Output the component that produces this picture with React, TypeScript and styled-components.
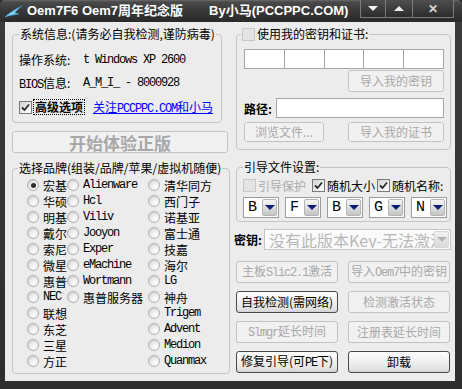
import styled, { createGlobalStyle } from "styled-components";

const GlobalStyle = createGlobalStyle`
  html, body {
    margin: 0;
    padding: 0;
    background: #2f2f2f;
  }
  body {
    font-family: "Noto Sans CJK SC", "Liberation Sans", sans-serif;
    font-size: 12px;
    color: #000;
  }
`;

const Window = styled.div`
  width: 462px;
  height: 389px;
  box-sizing: border-box;
  display: flex;
  flex-direction: column;
  background: linear-gradient(#3c3c3c, #2e2e2e);
  border-radius: 5px 5px 0 0;
  overflow: hidden;
`;

const TitleBar = styled.div`
  height: 22px;
  flex: none;
  display: flex;
  align-items: flex-start;
  padding-left: 5px;
  background: linear-gradient(#6a6a6a 0, #4a4a4a 2px, #363636 55%, #2a2a2a 100%);
  color: #fff;
  font-family: "Liberation Sans", "Noto Sans CJK SC", sans-serif;
  font-weight: bold;
  font-size: 13px;
`;

const TitleText = styled.span<{ $gap: number }>`
  line-height: 22px;
  margin-right: ${(p) => p.$gap}px;
  white-space: nowrap;
`;

const Controls = styled.div`
  margin-left: auto;
  margin-right: 8px;
  display: flex;
`;

const CtrlBtn = styled.div<{ $w: number }>`
  width: ${(p) => p.$w}px;
  height: 18px;
  box-sizing: border-box;
  border: 1px solid #7c7c7c;
  border-top: none;
  margin-left: -1px;
  background: linear-gradient(#4e4e4e, #2c2c2c);
  display: flex;
  align-items: center;
  justify-content: center;
  color: #d8d8d8;
  font-size: 12px;
`;

const Tri = styled.span<{ $up?: boolean; $color?: string }>`
  width: 0;
  height: 0;
  border-left: 5px solid transparent;
  border-right: 5px solid transparent;
  ${(p) =>
    p.$up
      ? `border-bottom: 5px solid ${p.$color || "#f0f0f0"};`
      : `border-top: 5px solid ${p.$color || "#f0f0f0"};`}
`;

const Body = styled.div`
  flex: 1;
  margin: 0 7px 8px 5px;
  background: #ececec;
  display: flex;
  gap: 6px;
  padding: 5px 4px 0 7px;
`;

const Column = styled.div<{ $w: number }>`
  width: ${(p) => p.$w}px;
  display: flex;
  flex-direction: column;
`;

const Group = styled.fieldset<{ $w?: number; $pad: string }>`
  margin: 0;
  min-width: 0;
  width: ${(p) => (p.$w ? `${p.$w}px` : "auto")};
  box-sizing: border-box;
  border: 1px solid #c4c4c4;
  border-radius: 4px;
  padding: ${(p) => p.$pad};
  display: flex;
  flex-direction: column;
`;

const Legend = styled.legend<{ $ml: number }>`
  padding: 0 1px;
  margin-left: ${(p) => p.$ml}px;
  line-height: 14px;
  height: 14px;
  display: flex;
  align-items: center;
  gap: 2px;
  white-space: nowrap;
`;

const Latin = styled.span<{ $size?: number }>`
  font-family: "Liberation Mono", monospace;
  font-size: ${(p) => p.$size || 12}px;
  letter-spacing: -1.2px;
`;

const InfoRow = styled.div<{ $mt?: number }>`
  display: grid;
  grid-template-columns: 64px 1fr;
  align-items: center;
  height: 16px;
  margin-top: ${(p) => p.$mt || 0}px;
  white-space: nowrap;
`;

const OptionRow = styled.div`
  display: flex;
  align-items: center;
  height: 16px;
  margin-top: 9px;
  white-space: nowrap;
`;

const Box = styled.span<{ $disabled?: boolean }>`
  width: 13px;
  height: 13px;
  flex: none;
  box-sizing: border-box;
  border: 1px solid ${(p) => (p.$disabled ? "#c8c8c8" : "#7a7a7a")};
  background: ${(p) =>
    p.$disabled ? "#e4e4e4" : "linear-gradient(135deg, #d0d0d0, #f4f4f4 70%, #ffffff)"};
  display: inline-flex;
  align-items: center;
  justify-content: center;
`;

const FocusLabel = styled.span`
  font-weight: bold;
  border: 1px dotted #000;
  padding: 0 1px;
  line-height: 14px;
  margin-left: 1px;
`;

const Link = styled.a`
  color: #0000ff;
  text-decoration: underline;
  margin-left: 8px;
  cursor: pointer;
`;

const Btn = styled.button<{ $w?: number; $h?: number; $big?: boolean }>`
  width: ${(p) => (p.$w ? `${p.$w}px` : "auto")};
  height: ${(p) => p.$h || 22}px;
  box-sizing: border-box;
  padding: 0;
  font-family: "Noto Sans CJK SC", sans-serif;
  font-size: ${(p) => (p.$big ? 17 : 12)}px;
  font-weight: ${(p) => (p.$big ? "bold" : "normal")};
  line-height: 1;
  border-radius: 3px;
  border: 1px solid #4a4a4a;
  background: linear-gradient(#ffffff, #f0f0f0 45%, #e2e2e2 85%, #d2d2d2);
  color: #000;
  white-space: nowrap;
  &:disabled {
    border-color: #c2c2c2;
    background: #f1f1f1;
    color: #a8a8a8;
  }
`;

const StartBtn = styled(Btn)`
  margin-top: 8px;
  width: 216px;
`;

const BrandGroup = styled(Group)`
  margin-top: 8px;
  flex-direction: row;
`;

const BrandCol = styled.div<{ $w: number }>`
  width: ${(p) => p.$w}px;
  display: flex;
  flex-direction: column;
`;

const BrandItem = styled.label`
  height: 16px;
  display: flex;
  align-items: center;
  gap: 4px;
  white-space: nowrap;
`;

const Radio = styled.span<{ $on?: boolean }>`
  width: 12px;
  height: 12px;
  flex: none;
  box-sizing: border-box;
  border-radius: 50%;
  border: 1px solid #b0b0b0;
  background: radial-gradient(circle at 65% 70%, #ffffff 0, #ececec 45%, #c4c4c4 100%);
  display: flex;
  align-items: center;
  justify-content: center;
  &::after {
    content: "";
    display: ${(p) => (p.$on ? "block" : "none")};
    width: 5px;
    height: 5px;
    border-radius: 50%;
    background: #303030;
  }
`;

const KeyRow = styled.div`
  display: flex;
  height: 20px;
  box-sizing: border-box;
  border: 1px solid #a6a6a6;
  background: #fff;
`;

const KeyCell = styled.span`
  flex: 1;
  & + & {
    border-left: 1px solid #a6a6a6;
  }
`;

const RightAlign = styled.div<{ $mt: number }>`
  display: flex;
  justify-content: flex-end;
  margin-top: ${(p) => p.$mt}px;
`;

const PathRow = styled.div`
  display: flex;
  align-items: center;
  margin-top: 6px;
  gap: 2px;
`;

const BoldLabel = styled.span<{ $w: number }>`
  width: ${(p) => p.$w}px;
  font-weight: 600;
  white-space: nowrap;
`;

const TextInput = styled.div`
  flex: 1;
  height: 20px;
  box-sizing: border-box;
  border: 1px solid #a6a6a6;
  background: #fff;
`;

const SplitRow = styled.div`
  display: flex;
  justify-content: space-between;
  margin-top: 4px;
`;

const GroupB = styled(Group)`
  margin-top: 10px;
`;

const CheckRow = styled.div`
  display: flex;
  align-items: center;
  height: 14px;
  white-space: nowrap;
`;

const CheckItem = styled.span<{ $w: number; $disabled?: boolean }>`
  width: ${(p) => p.$w}px;
  display: flex;
  align-items: center;
  gap: 2px;
  color: ${(p) => (p.$disabled ? "#ababab" : "#000")};
`;

const ComboRow = styled.div`
  display: flex;
  gap: 6px;
  margin-top: 5px;
`;

const Combo = styled.div<{ $w?: number; $disabled?: boolean }>`
  width: ${(p) => (p.$w ? `${p.$w}px` : "36px")};
  height: 21px;
  flex: ${(p) => (p.$w ? "none" : "none")};
  box-sizing: border-box;
  border: 1px solid ${(p) => (p.$disabled ? "#c6c6c6" : "#9c9c9c")};
  background: ${(p) => (p.$disabled ? "#fafafa" : "#fff")};
  display: flex;
  align-items: stretch;
  padding: 1px;
  overflow: hidden;
`;

const ComboValue = styled.span<{ $disabled?: boolean }>`
  flex: 1;
  min-width: 0;
  overflow: hidden;
  white-space: nowrap;
  display: flex;
  align-items: center;
  padding-left: 3px;
  color: ${(p) => (p.$disabled ? "#b8b8b8" : "#000")};
  font-size: ${(p) => (p.$disabled ? 16 : 12)}px;
`;

const DropBtn = styled.span<{ $disabled?: boolean }>`
  width: 15px;
  flex: none;
  box-sizing: border-box;
  border: 1px solid ${(p) => (p.$disabled ? "#d8d8d8" : "#b4b4b4")};
  border-radius: 2px;
  background: ${(p) =>
    p.$disabled ? "linear-gradient(#f0f0f0, #dadada)" : "linear-gradient(#f6f6f6, #d8d8d8 60%, #c4c4c4)"};
  display: flex;
  align-items: center;
  justify-content: center;
`;

const KeyLine = styled.div`
  display: flex;
  align-items: center;
  margin-top: 7px;
  margin-left: -2px;
`;

const ButtonGrid = styled.div`
  display: grid;
  grid-template-columns: 102px 102px;
  grid-auto-rows: 22px;
  column-gap: 10px;
  row-gap: 8px;
  margin-top: 11px;
`;

function CheckMark() {
  return (
    <svg width="9" height="9" viewBox="0 0 9 9">
      <path d="M1 4.5 L3.5 7 L8 1.5" fill="none" stroke="#2a2a2a" strokeWidth="1.8" />
    </svg>
  );
}

function AppIcon() {
  return (
    <svg width="18" height="14" viewBox="0 0 18 14" style={{ marginTop: 5, marginRight: 4 }}>
      <path
        d="M0 12 C4 8 10 4 17 1 C13 4 11 6 10 8 L14 9 L8 10 C5 10.5 2 11.2 0 12 Z"
        fill="#7fd0f5"
        stroke="#3a9ad0"
        strokeWidth="0.6"
      />
    </svg>
  );
}

const col1 = ["宏基", "华硕", "明基", "戴尔", "索尼", "微星", "惠普", "NEC", "联想", "东芝", "三星", "方正"];
const col2 = ["Alienware", "Hcl", "Viliv", "Jooyon", "Exper", "eMachine", "Wortmann", "惠普服务器"];
const col3 = ["清华同方", "西门子", "诺基亚", "富士通", "技嘉", "海尔", "LG", "神舟", "Trigem", "Advent", "Medion", "Quanmax"];

const isLatin = (s: string) => /^[A-Za-z]+$/.test(s);

function BrandList({ items, width }: { items: string[]; width: number }) {
  return (
    <BrandCol $w={width}>
      {items.map((b) => (
        <BrandItem key={b}>
          <Radio $on={b === "宏基"} />
          {isLatin(b) ? <Latin>{b}</Latin> : <span>{b}</span>}
        </BrandItem>
      ))}
    </BrandCol>
  );
}

function SmallCombo({ value }: { value: string }) {
  return (
    <Combo>
      <ComboValue>
        <Latin $size={15}>{value}</Latin>
      </ComboValue>
      <DropBtn>
        <Tri $color="#0c1f6e" />
      </DropBtn>
    </Combo>
  );
}

export default function App() {
  return (
    <>
      <GlobalStyle />
      <Window>
        <TitleBar>
          <AppIcon />
          <TitleText $gap={26}>Oem7F6 Oem7周年纪念版</TitleText>
          <TitleText $gap={0}>By小马(PCCPPC.COM)</TitleText>
          <Controls>
            <CtrlBtn $w={26}>
              <Tri />
            </CtrlBtn>
            <CtrlBtn $w={28}>
              <Tri $up />
            </CtrlBtn>
            <CtrlBtn $w={42}>✕</CtrlBtn>
          </Controls>
        </TitleBar>

        <Body>
          <Column $w={218}>
            <Group $w={210} $pad="10px 6px 7px 6px">
              <Legend $ml={0}>
                系统信息:(请务必自我检测,谨防病毒)
              </Legend>
              <InfoRow>
                <span>操作系统:</span>
                <Latin>t Windows XP 2600</Latin>
              </InfoRow>
              <InfoRow $mt={7}>
                <span>
                  <Latin>BIOS</Latin>信息:
                </span>
                <Latin>A_M_I_ - 8000928</Latin>
              </InfoRow>
              <OptionRow>
                <Box>
                  <CheckMark />
                </Box>
                <FocusLabel>高级选项</FocusLabel>
                <Link>
                  关注<Latin>PCCPPC.COM</Latin>和小马
                </Link>
              </OptionRow>
            </Group>

            <StartBtn $big disabled>
              开始体验正版
            </StartBtn>

            <BrandGroup $pad="2px 4px 4px 14px">
              <Legend $ml={-9}>选择品牌(组装/品牌/苹果/虚拟机随便)</Legend>
              <BrandList items={col1} width={40} />
              <BrandList items={col2} width={81} />
              <BrandList items={col3} width={70} />
            </BrandGroup>
          </Column>

          <Column $w={215}>
            <Group $pad="8px 6px 7px 7px">
              <Legend $ml={-3}>
                <Box $disabled />
                使用我的密钥和证书:
              </Legend>
              <KeyRow>
                <KeyCell />
                <KeyCell />
                <KeyCell />
                <KeyCell />
                <KeyCell />
              </KeyRow>
              <RightAlign $mt={1}>
                <Btn $w={96} disabled>
                  导入我的密钥
                </Btn>
              </RightAlign>
              <PathRow>
                <BoldLabel $w={30}>路径:</BoldLabel>
                <TextInput />
              </PathRow>
              <SplitRow>
                <Btn $w={80} $h={20} disabled>
                  浏览文件...
                </Btn>
                <Btn $w={96} $h={20} disabled>
                  导入我的证书
                </Btn>
              </SplitRow>
            </Group>

            <GroupB $pad="4px 2px 3px 6px">
              <Legend $ml={0}>引导文件设置:</Legend>
              <CheckRow>
                <CheckItem $w={70} $disabled>
                  <Box $disabled />
                  引导保护
                </CheckItem>
                <CheckItem $w={66}>
                  <Box>
                    <CheckMark />
                  </Box>
                  随机大小
                </CheckItem>
                <CheckItem $w={72}>
                  <Box>
                    <CheckMark />
                  </Box>
                  随机名称:
                </CheckItem>
              </CheckRow>
              <ComboRow>
                <SmallCombo value="B" />
                <SmallCombo value="F" />
                <SmallCombo value="B" />
                <SmallCombo value="G" />
                <SmallCombo value="N" />
              </ComboRow>
            </GroupB>

            <KeyLine>
              <BoldLabel $w={30}>密钥:</BoldLabel>
              <Combo $w={187} $disabled>
                <ComboValue $disabled>
                  没有此版本Key-无法激活
                </ComboValue>
                <DropBtn $disabled>
                  <Tri $color="#b4b4b4" />
                </DropBtn>
              </Combo>
            </KeyLine>

            <ButtonGrid>
              <Btn disabled>
                主板<Latin>Slic2.1</Latin>激活
              </Btn>
              <Btn disabled>
                导入<Latin>Oem7</Latin>中的密钥
              </Btn>
              <Btn>自我检测(需网络)</Btn>
              <Btn disabled>检测激活状态</Btn>
              <Btn disabled>
                <Latin>Slmgr</Latin>延长时间
              </Btn>
              <Btn disabled>注册表延长时间</Btn>
              <Btn>
                修复引导(可<Latin>PE</Latin>下)
              </Btn>
              <Btn>卸载</Btn>
            </ButtonGrid>
          </Column>
        </Body>
      </Window>
    </>
  );
}
